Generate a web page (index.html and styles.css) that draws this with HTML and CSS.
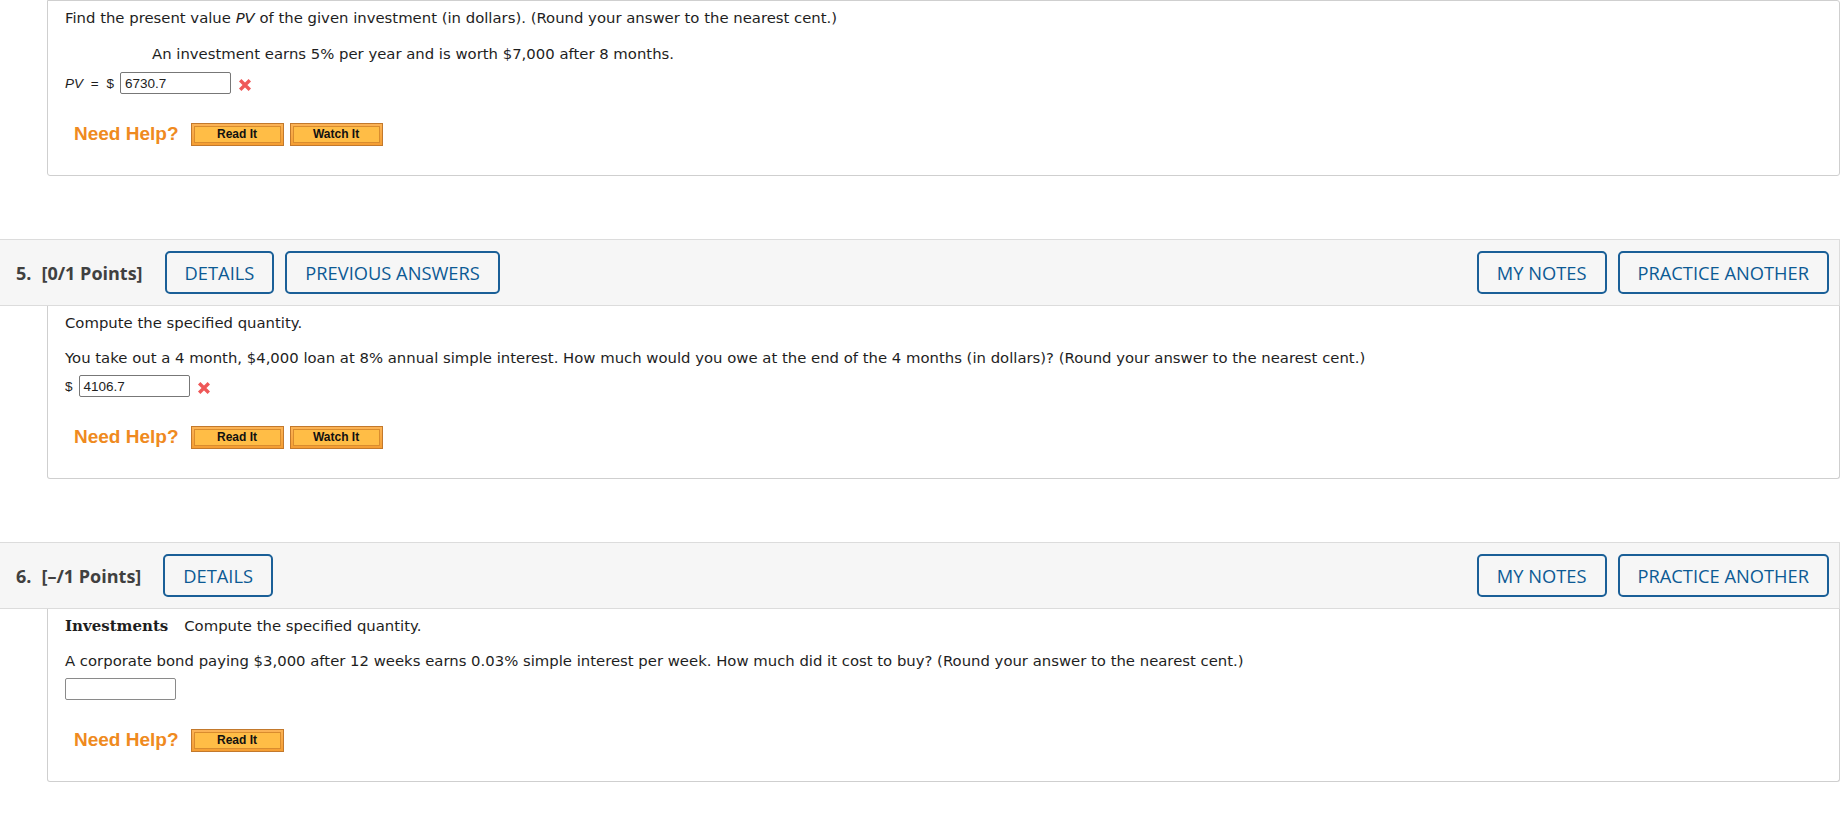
FILE: index.html
```html
<!DOCTYPE html>
<html lang="en">
<head>
<meta charset="utf-8">
<title>Assignment</title>
<link rel="stylesheet" href="styles.css">
</head>
<body>
<div class="page">

  <section class="q q-first">
    <div class="qbody">
      <p class="line">Find the present value <i>PV</i> of the given investment (in dollars). (Round your answer to the nearest cent.)</p>
      <p class="line indent gap16">An investment earns 5% per year and is worth $7,000 after 8 months.</p>
      <div class="answer gap8">
        <span class="lbl"><i>PV</i> = $</span>
        <span class="input">6730.7</span>
        <svg class="wrong" viewBox="0 0 14 14" width="14" height="14"><path d="M2.2 2.2 L11.8 11.8 M11.8 2.2 L2.2 11.8" stroke="#ef5858" stroke-width="3.4" fill="none"/></svg>
      </div>
      <div class="help">
        <span class="need">Need Help?</span>
        <span class="hbtn first"><span class="hin">Read It</span></span>
        <span class="hbtn"><span class="hin">Watch It</span></span>
      </div>
    </div>
  </section>

  <section class="q">
    <header class="qhead">
      <div class="left">
        <span class="qtitle"><span class="num">5.</span>[0/1 Points]</span>
        <span class="btn">DETAILS</span>
        <span class="btn">PREVIOUS ANSWERS</span>
      </div>
      <div class="right">
        <span class="btn">MY NOTES</span>
        <span class="btn">PRACTICE ANOTHER</span>
      </div>
    </header>
    <div class="qbody">
      <p class="line">Compute the specified quantity.</p>
      <p class="line gap15">You take out a 4 month, $4,000 loan at 8% annual simple interest. How much would you owe at the end of the 4 months (in dollars)? (Round your answer to the nearest cent.)</p>
      <div class="answer gap7">
        <span class="lbl">$</span>
        <span class="input">4106.7</span>
        <svg class="wrong" viewBox="0 0 14 14" width="14" height="14"><path d="M2.2 2.2 L11.8 11.8 M11.8 2.2 L2.2 11.8" stroke="#ef5858" stroke-width="3.4" fill="none"/></svg>
      </div>
      <div class="help">
        <span class="need">Need Help?</span>
        <span class="hbtn first"><span class="hin">Read It</span></span>
        <span class="hbtn"><span class="hin">Watch It</span></span>
      </div>
    </div>
  </section>

  <section class="q">
    <header class="qhead">
      <div class="left">
        <span class="qtitle"><span class="num">6.</span>[–/1 Points]</span>
        <span class="btn">DETAILS</span>
      </div>
      <div class="right">
        <span class="btn">MY NOTES</span>
        <span class="btn">PRACTICE ANOTHER</span>
      </div>
    </header>
    <div class="qbody">
      <p class="line"><b class="topic">Investments</b>Compute the specified quantity.</p>
      <p class="line gap15">A corporate bond paying $3,000 after 12 weeks earns 0.03% simple interest per week. How much did it cost to buy? (Round your answer to the nearest cent.)</p>
      <div class="answer gap7">
        <span class="input empty"></span>
      </div>
      <div class="help">
        <span class="need">Need Help?</span>
        <span class="hbtn first"><span class="hin">Read It</span></span>
      </div>
    </div>
  </section>

</div>
</body>
</html>
```

FILE: styles.css
```css
html, body {
  margin: 0;
  padding: 0;
  background: #ffffff;
}

body {
  font-family: "DejaVu Sans", Verdana, sans-serif;
  font-size: 14.85px;
  color: #1e1e1e;
}

.page {
  width: 1848px;
}

.q {
  margin-bottom: 63px;
}

.qbody {
  margin-left: 47px;
  width: 1793px;
  box-sizing: border-box;
  border: 1px solid #cfcfcf;
  border-top: none;
  border-radius: 0 0 3px 3px;
  padding: 7px 17px 29px 17px;
}

.q-first .qbody {
  border-top: 1px solid #cfcfcf;
  border-radius: 0 3px 3px 3px;
}

.line {
  margin: 0;
  line-height: 20px;
  white-space: nowrap;
}

.gap15 { margin-top: 15px; }
.gap16 { margin-top: 16px; }
.gap7 { margin-top: 7px; }
.gap8 { margin-top: 8px; }

.indent {
  padding-left: 87px;
}

.topic {
  font-family: "DejaVu Serif", Georgia, serif;
  font-weight: bold;
  font-size: 15px;
  margin-right: 16px;
}

.answer {
  display: flex;
  align-items: center;
  height: 22px;
  font-family: "Liberation Sans", Arial, sans-serif;
  font-size: 13.5px;
}

.lbl {
  margin-right: 6px;
  word-spacing: 4px;
}

.input {
  display: inline-flex;
  align-items: center;
  box-sizing: border-box;
  width: 111px;
  height: 22px;
  border: 1px solid #777;
  border-radius: 2px;
  padding-left: 4px;
  color: #222;
  background: #fff;
}

.input.empty {
  border-color: #8a8a8a;
}

.wrong {
  margin-left: 7px;
  margin-top: 3px;
}

.help {
  display: flex;
  align-items: center;
  height: 24px;
  margin-top: 28px;
  padding-left: 9px;
}

.need {
  font-family: "Liberation Sans", Arial, sans-serif;
  font-weight: bold;
  font-size: 19px;
  color: #ef8a20;
  margin-right: 12px;
}

.hbtn {
  display: inline-flex;
  box-sizing: border-box;
  width: 93px;
  height: 23px;
  border: 1px solid #c3792c;
  background: linear-gradient(#fbb356, #f59e32);
  padding: 2px;
  margin-left: 6px;
}

.hbtn.first {
  margin-left: 0;
}

.hin {
  flex: 1;
  display: flex;
  align-items: center;
  justify-content: center;
  border: 1px solid #d98c2e;
  background: #ffbd46;
  font-family: "Liberation Sans", Arial, sans-serif;
  font-weight: bold;
  font-size: 12px;
  color: #111;
}

.qhead {
  box-sizing: border-box;
  width: 1840px;
  height: 67px;
  display: flex;
  align-items: center;
  justify-content: space-between;
  padding: 0 10px 0 16px;
  background: #f6f6f6;
  border: 1px solid #dcdcdc;
  border-left: none;
  font-family: "Open Sans", sans-serif;
}

.left, .right {
  display: flex;
  align-items: center;
  gap: 11px;
}

.qtitle {
  font-weight: 700;
  font-size: 18px;
  color: #404040;
  margin-right: 11px;
}

.num {
  margin-right: 10px;
}

.btn {
  display: inline-flex;
  align-items: center;
  box-sizing: border-box;
  height: 43px;
  padding: 0 18px;
  border: 2px solid #1a5f97;
  border-radius: 5px;
  color: #0c5a94;
  font-size: 18.3px;
  font-weight: 400;
}
```
